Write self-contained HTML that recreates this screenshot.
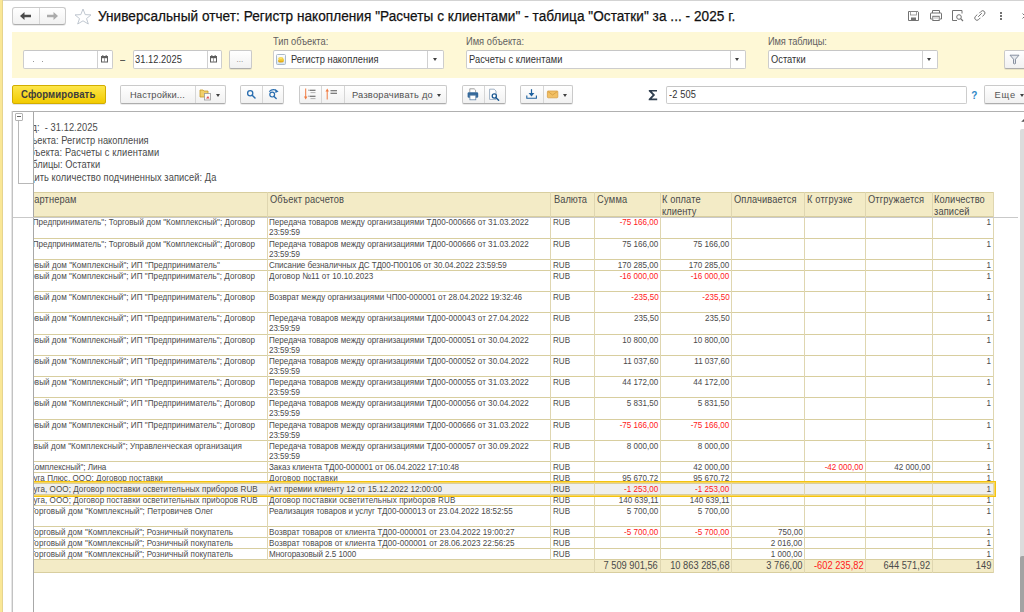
<!DOCTYPE html>
<html><head><meta charset="utf-8">
<style>
*{margin:0;padding:0;box-sizing:border-box}
html,body{width:1024px;height:612px;overflow:hidden;background:#fff;font-family:"Liberation Sans",sans-serif}
.a{position:absolute}
.t{position:absolute;white-space:pre;line-height:1.149;font-family:"Liberation Sans",sans-serif}
.btn{position:absolute;border:1px solid #cacaca;border-bottom-color:#adadad;border-radius:2px;background:linear-gradient(#ffffff,#f1f1f1);box-shadow:0 1px 0 rgba(0,0,0,0.08)}
.fld{position:absolute;border:1px solid #cdcdcd;border-top-color:#c6c6c6;border-radius:2px;background:#fff}
.dv{position:absolute;top:0;bottom:0;width:1px;background:#d0d0d0}
.lbl{position:absolute;white-space:nowrap;font-size:9.3px;line-height:1.149;color:#5e5a58}
.ddarrow{position:absolute;width:0;height:0;border-left:2.5px solid transparent;border-right:2.5px solid transparent;border-top:3px solid #404040}
#clip{position:absolute;left:34px;top:112px;width:986px;height:500px;overflow:hidden}
#inner{position:absolute;left:-34px;top:-112px;width:1024px;height:612px}
</style></head><body>
<!-- top line & left strip -->
<div class="a" style="left:0;top:0;width:1024px;height:1px;background:#d3d3d3"></div>
<div class="a" style="left:0;top:0;width:2px;height:612px;background:#fae796"></div><div class="a" style="left:2px;top:0;width:1px;height:612px;background:#e6d48e"></div>

<!-- nav buttons -->
<div class="btn" style="left:12px;top:7px;width:54px;height:18px;border-radius:3px"></div>
<div class="a" style="left:39px;top:8px;width:1px;height:16px;background:#d6d6d6"></div>
<svg class="a" style="left:19px;top:11px" width="14" height="10" viewBox="0 0 14 10"><path d="M1 5 L5.5 1 L5.5 3.8 L12 3.8 L12 6.2 L5.5 6.2 L5.5 9 Z" fill="#4a4a4a"/></svg>
<svg class="a" style="left:45px;top:11px" width="14" height="10" viewBox="0 0 14 10"><path d="M13 5 L8.5 1 L8.5 3.8 L2 3.8 L2 6.2 L8.5 6.2 L8.5 9 Z" fill="#ababab"/></svg>
<!-- star -->
<svg class="a" style="left:73.5px;top:7.5px" width="18" height="18" viewBox="0 0 18 18"><path d="M9 1 L11.2 6.6 L17 6.9 L12.5 10.6 L14.3 16 L9 12.8 L3.7 16 L5.5 10.6 L1 6.9 L6.8 6.6 Z" fill="none" stroke="#b9c1cb" stroke-width="0.9" stroke-linejoin="round"/></svg>
<!-- title -->

<!-- right icons -->
<svg class="a" style="left:907px;top:10px" width="13" height="12" viewBox="0 0 13 12">
 <path d="M1.5 1.5 H10.8 L11.5 2.2 V10.5 H1.5 Z" fill="none" stroke="#727272" stroke-width="1"/>
 <rect x="3.5" y="1.5" width="6" height="3.5" fill="none" stroke="#8a8a8a" stroke-width="0.8"/>
 <rect x="4" y="7.5" width="5" height="3" fill="#727272"/>
</svg>
<svg class="a" style="left:929px;top:9px" width="14" height="13" viewBox="0 0 14 13">
 <path d="M3.5 4 V1.5 H10.5 V4" fill="none" stroke="#727272" stroke-width="1"/>
 <path d="M3 10 H1.5 V4.5 Q1.5 4 2 4 H12 Q12.5 4 12.5 4.5 V10 H11" fill="none" stroke="#727272" stroke-width="1"/>
 <rect x="3.8" y="7.3" width="6.4" height="4.2" fill="none" stroke="#727272" stroke-width="1"/>
 <path d="M5 9 H9" stroke="#9a9a9a" stroke-width="0.7"/>
</svg>
<svg class="a" style="left:951px;top:9px" width="14" height="13" viewBox="0 0 14 13">
 <path d="M6 11.5 H1.5 V1.5 H11 V4.5" fill="none" stroke="#727272" stroke-width="1"/>
 <circle cx="8" cy="8" r="2.3" fill="none" stroke="#727272" stroke-width="1"/>
 <path d="M9.7 9.7 L12 12" stroke="#727272" stroke-width="1.2"/>
</svg>
<svg class="a" style="left:973px;top:9px" width="14" height="13" viewBox="0 0 14 13">
 <path d="M5.2 7.8 L8.8 4.2" stroke="#727272" stroke-width="1"/>
 <path d="M6.3 4.2 L8.2 2.3 Q9.8 0.9 11.3 2.4 Q12.8 3.9 11.3 5.6 L9.4 7.4" fill="none" stroke="#727272" stroke-width="1"/>
 <path d="M7.4 8.8 L5.5 10.7 Q3.9 12.1 2.4 10.6 Q0.9 9.1 2.4 7.4 L4.3 5.6" fill="none" stroke="#727272" stroke-width="1"/>
</svg>
<div class="a" style="left:1000px;top:12px;width:2px;height:2px;background:#727272"></div>
<div class="a" style="left:1000px;top:15px;width:2px;height:2px;background:#727272"></div>
<div class="a" style="left:1000px;top:18px;width:2px;height:2px;background:#727272"></div>
<svg class="a" style="left:1020.5px;top:12px" width="8" height="8" viewBox="0 0 8 8"><path d="M1.5 1.5 L6.5 6.5 M6.5 1.5 L1.5 6.5" stroke="#777" stroke-width="1"/></svg>

<!-- settings panel -->
<div class="a" style="left:12px;top:32px;width:1012px;height:46px;background:#fef8d6"></div>

<!-- date 1 -->
<div class="fld" style="left:23px;top:50px;width:90px;height:19px">
  <div class="dv" style="left:73px"></div>
</div>
<div class="a" style="left:33px;top:61px;width:1px;height:1px;background:#999"></div>
<div class="a" style="left:42px;top:61px;width:1px;height:1px;background:#999"></div>
<svg class="a" style="left:101px;top:55px" width="8" height="8" viewBox="0 0 8 8"><rect x="0.5" y="1.5" width="6" height="5.5" fill="none" stroke="#5e5e5e" stroke-width="1"/><rect x="0" y="1" width="7" height="2.2" fill="#5e5e5e"/><rect x="1.2" y="0.2" width="1.2" height="1" fill="#5e5e5e"/><rect x="4.6" y="0.2" width="1.2" height="1" fill="#5e5e5e"/><rect x="3.1" y="3" width="0.8" height="4" fill="#8a8a8a"/></svg>
<!-- date 2 -->
<div class="fld" style="left:133px;top:50px;width:89px;height:19px">
  <div class="dv" style="left:73px"></div>
</div>
<svg class="a" style="left:210px;top:55px" width="8" height="8" viewBox="0 0 8 8"><rect x="0.5" y="1.5" width="6" height="5.5" fill="none" stroke="#5e5e5e" stroke-width="1"/><rect x="0" y="1" width="7" height="2.2" fill="#5e5e5e"/><rect x="1.2" y="0.2" width="1.2" height="1" fill="#5e5e5e"/><rect x="4.6" y="0.2" width="1.2" height="1" fill="#5e5e5e"/><rect x="3.1" y="3" width="0.8" height="4" fill="#8a8a8a"/></svg>
<!-- ... button -->
<div class="btn" style="left:229px;top:50px;width:23px;height:19px"></div>

<!-- Тип объекта -->
<div class="fld" style="left:273px;top:50px;width:171px;height:19px"><div class="dv" style="left:153px"></div></div>
<svg class="a" style="left:276px;top:54px" width="10" height="11" viewBox="0 0 10 11"><defs><linearGradient id="gb" x1="0" y1="0" x2="0" y2="1"><stop offset="0" stop-color="#ffffff"/><stop offset="1" stop-color="#d6e4ef"/></linearGradient></defs><rect x="0.5" y="0.5" width="9" height="10" rx="1" fill="url(#gb)" stroke="#a9b9c9"/><ellipse cx="5" cy="6.9" rx="2.9" ry="1.7" fill="#e0a818"/><ellipse cx="5.3" cy="5.9" rx="2.7" ry="1.4" fill="#f2c530"/><ellipse cx="4.8" cy="4.4" rx="2.6" ry="1.5" fill="#f4d040"/><ellipse cx="4.8" cy="4.1" rx="1.6" ry="0.7" fill="#fae890"/></svg>
<div class="ddarrow" style="left:433px;top:58px"></div>

<!-- Имя объекта -->
<div class="fld" style="left:466px;top:50px;width:280px;height:19px"><div class="dv" style="left:263px"></div></div>
<div class="ddarrow" style="left:735px;top:58px"></div>

<!-- Имя таблицы -->
<div class="fld" style="left:768px;top:50px;width:170px;height:19px"><div class="dv" style="left:153px"></div></div>
<div class="ddarrow" style="left:927px;top:58px"></div>

<!-- filter button -->
<div class="btn" style="left:1004px;top:50px;width:30px;height:19px"></div>
<svg class="a" style="left:1009px;top:54px" width="11" height="11" viewBox="0 0 11 11"><path d="M1 1.2 H10 L6.5 5.2 V9.5 Q5.5 10.3 4.5 9.5 V5.2 Z" fill="#e6e9ee" stroke="#7d8796" stroke-width="0.9" stroke-linejoin="round"/></svg>

<!-- toolbar -->
<div class="a" style="left:12px;top:85px;width:94px;height:19px;border:1px solid #d2ad00;border-radius:2px;background:linear-gradient(#fde64a,#f2cb00);box-shadow:0 1px 0 rgba(0,0,0,0.1)"></div>

<div class="btn" style="left:120px;top:85px;width:106px;height:19px"><div class="dv" style="left:74px;background:#d6d6d6"></div></div>
<svg class="a" style="left:199.3px;top:87.5px" width="14" height="13" viewBox="0 0 14 13"><path d="M1 2 H4 L5 3 H9 V9 H1 Z" fill="#f1cf6a" stroke="#c79a2a" stroke-width="0.8"/><rect x="5.5" y="5.5" width="6" height="6.5" fill="#fafafa" stroke="#9a9a9a" stroke-width="0.8"/><path d="M7 10.5 L9 8 L10.5 10.5 Z" fill="#e05050"/></svg>
<div class="ddarrow" style="left:216.3px;top:94px"></div>

<div class="btn" style="left:240px;top:85px;width:44px;height:19px"><div class="dv" style="left:21px;background:#d6d6d6"></div></div>
<svg class="a" style="left:240px;top:85px" width="44" height="19" viewBox="240 85 44 19">
 <circle cx="250.2" cy="93.2" r="2.6" fill="none" stroke="#2a6eb0" stroke-width="1.3"/>
 <path d="M252.2 95.2 L255 98" stroke="#2a6eb0" stroke-width="1.5" stroke-linecap="round"/>
 <circle cx="272.2" cy="94.6" r="2.4" fill="none" stroke="#2a6eb0" stroke-width="1.2"/>
 <path d="M274 96.4 L276.2 98.6" stroke="#2a6eb0" stroke-width="1.4" stroke-linecap="round"/>
 <path d="M269.2 91.6 Q272.5 88.2 276.5 90.6" fill="none" stroke="#2a6eb0" stroke-width="1.1"/>
 <path d="M275.2 89 L278.6 91.4 L275.4 93 Z" fill="#2a6eb0"/>
</svg>
<div class="btn" style="left:299px;top:85px;width:148px;height:19px"><div class="dv" style="left:21px;background:#d6d6d6"></div><div class="dv" style="left:44px;background:#d6d6d6"></div></div>
<svg class="a" style="left:299px;top:85px" width="44" height="19" viewBox="299 85 44 19">
 <path d="M305.7 88.5 V97" stroke="#f07a40" stroke-width="1"/>
 <path d="M304 96.5 L305.7 99.5 L307.4 96.5 Z" fill="#f07a40"/>
 <path d="M309.5 90.2 H315.5 M309.5 96.2 H315.5" stroke="#555" stroke-width="1.1"/>
 <path d="M310.5 92.6 H315.5 M310.5 98.6 H315.5" stroke="#aaa" stroke-width="0.9"/>
 <path d="M308 90.2 H308.8 M308 96.2 H308.8" stroke="#777" stroke-width="0.8"/>
 <path d="M327.2 91 V99.5" stroke="#f07a40" stroke-width="1"/>
 <path d="M325.5 91.5 L327.2 88.5 L328.9 91.5 Z" fill="#f07a40"/>
 <path d="M330.5 90.8 H337 M330.5 93.2 H337" stroke="#555" stroke-width="1.1"/>
</svg>
<div class="t" style="display:none"></div>
<div class="ddarrow" style="left:437px;top:94px"></div>

<div class="btn" style="left:462px;top:85px;width:44px;height:19px"><div class="dv" style="left:21px;background:#d6d6d6"></div></div>
<svg class="a" style="left:460px;top:82px" width="50" height="24" viewBox="460 82 50 24"><path d="M469.8 92.5 V88.8 H474.2 L475.6 90.2 V92.5" fill="#fff" stroke="#8a8a8a" stroke-width="0.8"/><rect x="467.6" y="92.3" width="10.6" height="5.4" rx="1.3" fill="#34689a"/><rect x="469.9" y="95.2" width="5.9" height="4.6" fill="#fff" stroke="#5f84a8" stroke-width="0.8"/>
<path d="M489.6 89.2 H494.2 L496 91 V99.4 H489.6 Z" fill="#fff" stroke="#8aa0b8" stroke-width="0.8"/><circle cx="494.3" cy="96" r="2.1" fill="#fff" stroke="#1f5a92" stroke-width="1.3"/><path d="M495.8 97.5 L498.6 100.2" stroke="#1f5a92" stroke-width="1.5" stroke-linecap="round"/></svg>

<div class="btn" style="left:520px;top:85px;width:53px;height:19px"><div class="dv" style="left:22px;background:#d6d6d6"></div></div>
<svg class="a" style="left:520px;top:82px" width="55" height="24" viewBox="520 82 55 24"><path d="M531.5 89.2 V95" stroke="#1f62a0" stroke-width="1.2"/><path d="M528.6 93 L531.5 96.4 L534.4 93 Z" fill="#1f62a0"/><path d="M526.8 95.6 V98.2 H536.4 V95.6" fill="none" stroke="#1f62a0" stroke-width="1.1"/>
<rect x="547.4" y="91" width="10.4" height="6.8" rx="0.8" fill="#f2c064" stroke="#d8a046" stroke-width="0.8"/><path d="M547.8 91.4 L552.6 95 L557.4 91.4" fill="none" stroke="#d39a3e" stroke-width="0.8"/></svg>
<div class="ddarrow" style="left:563px;top:94px"></div>

<svg class="a" style="left:647px;top:88px" width="13" height="14" viewBox="0 0 13 14"><path d="M1.8 2 H10 V3.6 H4.8 L8.1 7.1 L4.7 10.6 H10.2 V12.2 H1.7 V10.9 L5.6 7.1 L1.8 3.3 Z" fill="#2f3e4e"/></svg>
<div class="fld" style="left:666px;top:85.5px;width:301px;height:18px"></div>
<div class="btn" style="left:984px;top:85px;width:50px;height:19px"></div>
<div class="ddarrow" style="left:1019.5px;top:94px"></div>

<!-- report frame -->
<div class="a" style="left:12px;top:111px;width:1012px;height:1px;background:#b0b0b0"></div>
<div class="a" style="left:11px;top:111px;width:1px;height:501px;background:#e6e6e6"></div><div class="a" style="left:12px;top:111px;width:1px;height:501px;background:#c2c2c2"></div>
<div class="a" style="left:33px;top:112px;width:1px;height:500px;background:#a8a8a8"></div>
<!-- group tree -->
<div class="a" style="left:15px;top:113px;width:8px;height:8px;border:1px solid #b4b4b4;border-radius:1px;background:#fff"></div>
<div class="a" style="left:17px;top:116px;width:4px;height:1px;background:#666"></div>
<div class="a" style="left:18px;top:121px;width:1px;height:63px;background:#b8b8b8"></div>
<div class="a" style="left:18px;top:183px;width:15px;height:1px;background:#b8b8b8"></div>
<!-- freeze line -->
<div class="a" style="left:13px;top:217px;width:1005px;height:1px;background:#c9c9c9"></div>

<div class="t" style="left:98.00px;top:7.00px;font-size:14.96px;color:#111;font-weight:normal;transform:scaleX(0.9091);transform-origin:left 0;letter-spacing:0.0450px;-webkit-text-stroke:0.25px #111;">Универсальный отчет: Регистр накопления "Расчеты с клиентами" - таблица "Остатки" за ... - 2025 г.</div>
<div class="t" style="left:120.00px;top:54.00px;font-size:10.42px;color:#333;font-weight:normal;transform:scaleX(0.8929);transform-origin:left 0;">–</div>
<div class="t" style="left:135.40px;top:54.00px;font-size:10.42px;color:#333;font-weight:normal;transform:scaleX(0.8929);transform-origin:left 0;letter-spacing:0.0461px;">31.12.2025</div>
<div class="t" style="left:236.50px;top:55.00px;font-size:8.00px;color:#777;font-weight:normal;">...</div>
<div class="t" style="left:273.00px;top:36.00px;font-size:10.42px;color:#626060;font-weight:normal;transform:scaleX(0.8929);transform-origin:left 0;letter-spacing:-0.0028px;">Тип объекта:</div>
<div class="t" style="left:466.20px;top:36.00px;font-size:10.42px;color:#626060;font-weight:normal;transform:scaleX(0.8929);transform-origin:left 0;letter-spacing:0.0064px;">Имя объекта:</div>
<div class="t" style="left:768.20px;top:36.00px;font-size:10.42px;color:#626060;font-weight:normal;transform:scaleX(0.8929);transform-origin:left 0;letter-spacing:-0.1354px;">Имя таблицы:</div>
<div class="t" style="left:290.80px;top:54.00px;font-size:10.42px;color:#333;font-weight:normal;transform:scaleX(0.8929);transform-origin:left 0;letter-spacing:0.0432px;">Регистр накопления</div>
<div class="t" style="left:469.20px;top:54.00px;font-size:10.42px;color:#333;font-weight:normal;transform:scaleX(0.8929);transform-origin:left 0;letter-spacing:0.0890px;">Расчеты с клиентами</div>
<div class="t" style="left:771.00px;top:54.00px;font-size:10.42px;color:#333;font-weight:normal;transform:scaleX(0.8929);transform-origin:left 0;letter-spacing:0.0153px;">Остатки</div>
<div class="t" style="left:21.40px;top:89.00px;font-size:10.37px;color:#3c3c3c;font-weight:bold;transform:scaleX(0.9259);transform-origin:left 0;letter-spacing:0.1196px;">Сформировать</div>
<div class="t" style="left:129.90px;top:89.00px;font-size:9.86px;color:#505050;font-weight:normal;transform:scaleX(0.9434);transform-origin:left 0;letter-spacing:0.1509px;">Настройки...</div>
<div class="t" style="left:351.90px;top:89.00px;font-size:9.86px;color:#505050;font-weight:normal;transform:scaleX(0.9434);transform-origin:left 0;letter-spacing:0.2346px;">Разворачивать до</div>
<div class="t" style="left:668.70px;top:89.00px;font-size:10.42px;color:#333;font-weight:normal;transform:scaleX(0.8929);transform-origin:left 0;letter-spacing:0.1432px;">-2 505</div>
<div class="t" style="left:994.50px;top:90.00px;font-size:9.30px;color:#555555;font-weight:normal;letter-spacing:0.8420px;">Еще</div>
<div class="t" style="left:971.30px;top:90.00px;font-size:10.00px;color:#3088c8;font-weight:bold;">?</div>
<div id="clip"><div id="inner">
<div class="a" style="left:34px;top:192px;width:959px;height:24px;background:#f3ebc6"></div>
<div class="a" style="left:34px;top:559px;width:959px;height:13px;background:#f3ebc6"></div>
<div class="a" style="left:34px;top:484px;width:959px;height:10px;background:#efefef"></div>
<div class="a" style="left:34px;top:192px;width:960px;height:1px;background:#d8ce9f"></div>
<div class="a" style="left:34px;top:216px;width:960px;height:1px;background:#d8ce9f"></div>
<div class="a" style="left:34px;top:238px;width:960px;height:1px;background:#d8ce9f"></div>
<div class="a" style="left:34px;top:259px;width:960px;height:1px;background:#d8ce9f"></div>
<div class="a" style="left:34px;top:270px;width:960px;height:1px;background:#d8ce9f"></div>
<div class="a" style="left:34px;top:291px;width:960px;height:1px;background:#d8ce9f"></div>
<div class="a" style="left:34px;top:312px;width:960px;height:1px;background:#d8ce9f"></div>
<div class="a" style="left:34px;top:334px;width:960px;height:1px;background:#d8ce9f"></div>
<div class="a" style="left:34px;top:355px;width:960px;height:1px;background:#d8ce9f"></div>
<div class="a" style="left:34px;top:376px;width:960px;height:1px;background:#d8ce9f"></div>
<div class="a" style="left:34px;top:397px;width:960px;height:1px;background:#d8ce9f"></div>
<div class="a" style="left:34px;top:419px;width:960px;height:1px;background:#d8ce9f"></div>
<div class="a" style="left:34px;top:440px;width:960px;height:1px;background:#d8ce9f"></div>
<div class="a" style="left:34px;top:461px;width:960px;height:1px;background:#d8ce9f"></div>
<div class="a" style="left:34px;top:472px;width:960px;height:1px;background:#d8ce9f"></div>
<div class="a" style="left:34px;top:483px;width:960px;height:1px;background:#d8ce9f"></div>
<div class="a" style="left:34px;top:494px;width:960px;height:1px;background:#d8ce9f"></div>
<div class="a" style="left:34px;top:505px;width:960px;height:1px;background:#d8ce9f"></div>
<div class="a" style="left:34px;top:526px;width:960px;height:1px;background:#d8ce9f"></div>
<div class="a" style="left:34px;top:537px;width:960px;height:1px;background:#d8ce9f"></div>
<div class="a" style="left:34px;top:548px;width:960px;height:1px;background:#d8ce9f"></div>
<div class="a" style="left:34px;top:559px;width:960px;height:1px;background:#d8ce9f"></div>
<div class="a" style="left:34px;top:572px;width:960px;height:1px;background:#d8ce9f"></div>
<div class="a" style="left:267px;top:192px;width:1px;height:368px;background:#dfd6b0"></div>
<div class="a" style="left:550px;top:192px;width:1px;height:368px;background:#dfd6b0"></div>
<div class="a" style="left:594px;top:192px;width:1px;height:381px;background:#dfd6b0"></div>
<div class="a" style="left:660px;top:192px;width:1px;height:381px;background:#dfd6b0"></div>
<div class="a" style="left:731px;top:192px;width:1px;height:381px;background:#dfd6b0"></div>
<div class="a" style="left:804px;top:192px;width:1px;height:381px;background:#dfd6b0"></div>
<div class="a" style="left:865px;top:192px;width:1px;height:381px;background:#dfd6b0"></div>
<div class="a" style="left:932px;top:192px;width:1px;height:381px;background:#dfd6b0"></div>
<div class="a" style="left:993px;top:192px;width:1px;height:381px;background:#dfd6b0"></div>
<div class="a" style="left:0px;top:217px;width:1018px;height:1px;background:#c9c9c9"></div>
<div class="t" style="left:28.94px;top:194.00px;font-size:10.42px;color:#4a4a4a;font-weight:normal;transform:scaleX(0.8929);transform-origin:left 0;letter-spacing:0.1389px;">партнерам</div>
<div class="t" style="left:269.60px;top:194.00px;font-size:10.42px;color:#4a4a4a;font-weight:normal;transform:scaleX(0.8929);transform-origin:left 0;letter-spacing:0.0724px;">Объект расчетов</div>
<div class="t" style="left:553.60px;top:194.00px;font-size:10.42px;color:#4a4a4a;font-weight:normal;transform:scaleX(0.8929);transform-origin:left 0;letter-spacing:0.0250px;">Валюта</div>
<div class="t" style="left:597.20px;top:194.00px;font-size:10.42px;color:#4a4a4a;font-weight:normal;transform:scaleX(0.8929);transform-origin:left 0;letter-spacing:0.3048px;">Сумма</div>
<div class="t" style="left:662.20px;top:194.00px;font-size:10.42px;color:#4a4a4a;font-weight:normal;transform:scaleX(0.8929);transform-origin:left 0;letter-spacing:0.1091px;">К оплате</div>
<div class="t" style="left:662.20px;top:206.00px;font-size:10.42px;color:#4a4a4a;font-weight:normal;transform:scaleX(0.8929);transform-origin:left 0;letter-spacing:0.0550px;">клиенту</div>
<div class="t" style="left:733.60px;top:194.00px;font-size:10.42px;color:#4a4a4a;font-weight:normal;transform:scaleX(0.8929);transform-origin:left 0;letter-spacing:0.1124px;">Оплачивается</div>
<div class="t" style="left:807.00px;top:194.00px;font-size:10.42px;color:#4a4a4a;font-weight:normal;transform:scaleX(0.8929);transform-origin:left 0;letter-spacing:0.1825px;">К отгрузке</div>
<div class="t" style="left:867.70px;top:194.00px;font-size:10.42px;color:#4a4a4a;font-weight:normal;transform:scaleX(0.8929);transform-origin:left 0;letter-spacing:0.1359px;">Отгружается</div>
<div class="t" style="left:934.40px;top:194.00px;font-size:10.42px;color:#4a4a4a;font-weight:normal;transform:scaleX(0.8929);transform-origin:left 0;letter-spacing:0.1089px;">Количество</div>
<div class="t" style="left:934.40px;top:206.00px;font-size:10.42px;color:#4a4a4a;font-weight:normal;transform:scaleX(0.8929);transform-origin:left 0;letter-spacing:0.1544px;">записей</div>
<div class="t" style="left:16.31px;top:217.00px;font-size:9.05px;color:#4a4a4a;font-weight:normal;transform:scaleX(0.8929);transform-origin:left 0;letter-spacing:0.0139px;">ИП "Предприниматель"; Торговый дом "Комплексный"; Договор</div>
<div class="t" style="left:268.90px;top:217.00px;font-size:9.05px;color:#4a4a4a;font-weight:normal;transform:scaleX(0.8929);transform-origin:left 0;letter-spacing:0.0184px;">Передача товаров между организациями ТД00-000666 от 31.03.2022</div>
<div class="t" style="left:268.90px;top:227.00px;font-size:9.05px;color:#4a4a4a;font-weight:normal;transform:scaleX(0.8929);transform-origin:left 0;letter-spacing:-0.0712px;">23:59:59</div>
<div class="t" style="left:553.00px;top:217.00px;font-size:9.05px;color:#4a4a4a;font-weight:normal;transform:scaleX(0.8929);transform-origin:left 0;">RUB</div>
<div class="t" style="right:365.80px;top:217.00px;font-size:9.05px;color:#ff2020;font-weight:normal;transform:scaleX(0.8929);transform-origin:right 0;">-75 166,00</div>
<div class="t" style="right:32.80px;top:217.00px;font-size:9.05px;color:#4a4a4a;font-weight:normal;transform:scaleX(0.8929);transform-origin:right 0;">1</div>
<div class="t" style="left:16.31px;top:239.00px;font-size:9.05px;color:#4a4a4a;font-weight:normal;transform:scaleX(0.8929);transform-origin:left 0;letter-spacing:0.0139px;">ИП "Предприниматель"; Торговый дом "Комплексный"; Договор</div>
<div class="t" style="left:268.90px;top:239.00px;font-size:9.05px;color:#4a4a4a;font-weight:normal;transform:scaleX(0.8929);transform-origin:left 0;letter-spacing:0.0184px;">Передача товаров между организациями ТД00-000666 от 31.03.2022</div>
<div class="t" style="left:268.90px;top:249.00px;font-size:9.05px;color:#4a4a4a;font-weight:normal;transform:scaleX(0.8929);transform-origin:left 0;letter-spacing:-0.0712px;">23:59:59</div>
<div class="t" style="left:553.00px;top:239.00px;font-size:9.05px;color:#4a4a4a;font-weight:normal;transform:scaleX(0.8929);transform-origin:left 0;">RUB</div>
<div class="t" style="right:365.80px;top:239.00px;font-size:9.05px;color:#4a4a4a;font-weight:normal;transform:scaleX(0.8929);transform-origin:right 0;">75 166,00</div>
<div class="t" style="right:294.80px;top:239.00px;font-size:9.05px;color:#4a4a4a;font-weight:normal;transform:scaleX(0.8929);transform-origin:right 0;">75 166,00</div>
<div class="t" style="right:32.80px;top:239.00px;font-size:9.05px;color:#4a4a4a;font-weight:normal;transform:scaleX(0.8929);transform-origin:right 0;">1</div>
<div class="t" style="left:13.67px;top:260.00px;font-size:9.05px;color:#4a4a4a;font-weight:normal;transform:scaleX(0.8929);transform-origin:left 0;letter-spacing:0.0625px;">Торговый дом "Комплексный"; ИП "Предприниматель"</div>
<div class="t" style="left:268.90px;top:260.00px;font-size:9.05px;color:#4a4a4a;font-weight:normal;transform:scaleX(0.8929);transform-origin:left 0;letter-spacing:-0.0572px;">Списание безналичных ДС ТД00-П00106 от 30.04.2022 23:59:59</div>
<div class="t" style="left:553.00px;top:260.00px;font-size:9.05px;color:#4a4a4a;font-weight:normal;transform:scaleX(0.8929);transform-origin:left 0;">RUB</div>
<div class="t" style="right:365.80px;top:260.00px;font-size:9.05px;color:#4a4a4a;font-weight:normal;transform:scaleX(0.8929);transform-origin:right 0;">170 285,00</div>
<div class="t" style="right:294.80px;top:260.00px;font-size:9.05px;color:#4a4a4a;font-weight:normal;transform:scaleX(0.8929);transform-origin:right 0;">170 285,00</div>
<div class="t" style="right:32.80px;top:260.00px;font-size:9.05px;color:#4a4a4a;font-weight:normal;transform:scaleX(0.8929);transform-origin:right 0;">1</div>
<div class="t" style="left:14.20px;top:271.00px;font-size:9.05px;color:#4a4a4a;font-weight:normal;transform:scaleX(0.8929);transform-origin:left 0;letter-spacing:0.0561px;">Торговый дом "Комплексный"; ИП "Предприниматель"; Договор</div>
<div class="t" style="left:268.90px;top:271.00px;font-size:9.05px;color:#4a4a4a;font-weight:normal;transform:scaleX(0.8929);transform-origin:left 0;letter-spacing:0.0732px;">Договор №11 от 10.10.2023</div>
<div class="t" style="left:553.00px;top:271.00px;font-size:9.05px;color:#4a4a4a;font-weight:normal;transform:scaleX(0.8929);transform-origin:left 0;">RUB</div>
<div class="t" style="right:365.80px;top:271.00px;font-size:9.05px;color:#ff2020;font-weight:normal;transform:scaleX(0.8929);transform-origin:right 0;">-16 000,00</div>
<div class="t" style="right:294.80px;top:271.00px;font-size:9.05px;color:#ff2020;font-weight:normal;transform:scaleX(0.8929);transform-origin:right 0;">-16 000,00</div>
<div class="t" style="right:32.80px;top:271.00px;font-size:9.05px;color:#4a4a4a;font-weight:normal;transform:scaleX(0.8929);transform-origin:right 0;">1</div>
<div class="t" style="left:14.20px;top:292.00px;font-size:9.05px;color:#4a4a4a;font-weight:normal;transform:scaleX(0.8929);transform-origin:left 0;letter-spacing:0.0561px;">Торговый дом "Комплексный"; ИП "Предприниматель"; Договор</div>
<div class="t" style="left:268.90px;top:292.00px;font-size:9.05px;color:#4a4a4a;font-weight:normal;transform:scaleX(0.8929);transform-origin:left 0;letter-spacing:-0.0308px;">Возврат между организациями ЧП00-000001 от 28.04.2022 19:32:46</div>
<div class="t" style="left:553.00px;top:292.00px;font-size:9.05px;color:#4a4a4a;font-weight:normal;transform:scaleX(0.8929);transform-origin:left 0;">RUB</div>
<div class="t" style="right:365.80px;top:292.00px;font-size:9.05px;color:#ff2020;font-weight:normal;transform:scaleX(0.8929);transform-origin:right 0;">-235,50</div>
<div class="t" style="right:294.80px;top:292.00px;font-size:9.05px;color:#ff2020;font-weight:normal;transform:scaleX(0.8929);transform-origin:right 0;">-235,50</div>
<div class="t" style="right:32.80px;top:292.00px;font-size:9.05px;color:#4a4a4a;font-weight:normal;transform:scaleX(0.8929);transform-origin:right 0;">1</div>
<div class="t" style="left:14.20px;top:313.00px;font-size:9.05px;color:#4a4a4a;font-weight:normal;transform:scaleX(0.8929);transform-origin:left 0;letter-spacing:0.0561px;">Торговый дом "Комплексный"; ИП "Предприниматель"; Договор</div>
<div class="t" style="left:268.90px;top:313.00px;font-size:9.05px;color:#4a4a4a;font-weight:normal;transform:scaleX(0.8929);transform-origin:left 0;letter-spacing:0.0184px;">Передача товаров между организациями ТД00-000043 от 27.04.2022</div>
<div class="t" style="left:268.90px;top:323.00px;font-size:9.05px;color:#4a4a4a;font-weight:normal;transform:scaleX(0.8929);transform-origin:left 0;letter-spacing:-0.0712px;">23:59:59</div>
<div class="t" style="left:553.00px;top:313.00px;font-size:9.05px;color:#4a4a4a;font-weight:normal;transform:scaleX(0.8929);transform-origin:left 0;">RUB</div>
<div class="t" style="right:365.80px;top:313.00px;font-size:9.05px;color:#4a4a4a;font-weight:normal;transform:scaleX(0.8929);transform-origin:right 0;">235,50</div>
<div class="t" style="right:294.80px;top:313.00px;font-size:9.05px;color:#4a4a4a;font-weight:normal;transform:scaleX(0.8929);transform-origin:right 0;">235,50</div>
<div class="t" style="right:32.80px;top:313.00px;font-size:9.05px;color:#4a4a4a;font-weight:normal;transform:scaleX(0.8929);transform-origin:right 0;">1</div>
<div class="t" style="left:14.20px;top:335.00px;font-size:9.05px;color:#4a4a4a;font-weight:normal;transform:scaleX(0.8929);transform-origin:left 0;letter-spacing:0.0561px;">Торговый дом "Комплексный"; ИП "Предприниматель"; Договор</div>
<div class="t" style="left:268.90px;top:335.00px;font-size:9.05px;color:#4a4a4a;font-weight:normal;transform:scaleX(0.8929);transform-origin:left 0;letter-spacing:0.0184px;">Передача товаров между организациями ТД00-000051 от 30.04.2022</div>
<div class="t" style="left:268.90px;top:345.00px;font-size:9.05px;color:#4a4a4a;font-weight:normal;transform:scaleX(0.8929);transform-origin:left 0;letter-spacing:-0.0712px;">23:59:59</div>
<div class="t" style="left:553.00px;top:335.00px;font-size:9.05px;color:#4a4a4a;font-weight:normal;transform:scaleX(0.8929);transform-origin:left 0;">RUB</div>
<div class="t" style="right:365.80px;top:335.00px;font-size:9.05px;color:#4a4a4a;font-weight:normal;transform:scaleX(0.8929);transform-origin:right 0;">10 800,00</div>
<div class="t" style="right:294.80px;top:335.00px;font-size:9.05px;color:#4a4a4a;font-weight:normal;transform:scaleX(0.8929);transform-origin:right 0;">10 800,00</div>
<div class="t" style="right:32.80px;top:335.00px;font-size:9.05px;color:#4a4a4a;font-weight:normal;transform:scaleX(0.8929);transform-origin:right 0;">1</div>
<div class="t" style="left:14.20px;top:356.00px;font-size:9.05px;color:#4a4a4a;font-weight:normal;transform:scaleX(0.8929);transform-origin:left 0;letter-spacing:0.0561px;">Торговый дом "Комплексный"; ИП "Предприниматель"; Договор</div>
<div class="t" style="left:268.90px;top:356.00px;font-size:9.05px;color:#4a4a4a;font-weight:normal;transform:scaleX(0.8929);transform-origin:left 0;letter-spacing:0.0184px;">Передача товаров между организациями ТД00-000052 от 30.04.2022</div>
<div class="t" style="left:268.90px;top:366.00px;font-size:9.05px;color:#4a4a4a;font-weight:normal;transform:scaleX(0.8929);transform-origin:left 0;letter-spacing:-0.0712px;">23:59:59</div>
<div class="t" style="left:553.00px;top:356.00px;font-size:9.05px;color:#4a4a4a;font-weight:normal;transform:scaleX(0.8929);transform-origin:left 0;">RUB</div>
<div class="t" style="right:365.80px;top:356.00px;font-size:9.05px;color:#4a4a4a;font-weight:normal;transform:scaleX(0.8929);transform-origin:right 0;">11 037,60</div>
<div class="t" style="right:294.80px;top:356.00px;font-size:9.05px;color:#4a4a4a;font-weight:normal;transform:scaleX(0.8929);transform-origin:right 0;">11 037,60</div>
<div class="t" style="right:32.80px;top:356.00px;font-size:9.05px;color:#4a4a4a;font-weight:normal;transform:scaleX(0.8929);transform-origin:right 0;">1</div>
<div class="t" style="left:14.20px;top:377.00px;font-size:9.05px;color:#4a4a4a;font-weight:normal;transform:scaleX(0.8929);transform-origin:left 0;letter-spacing:0.0561px;">Торговый дом "Комплексный"; ИП "Предприниматель"; Договор</div>
<div class="t" style="left:268.90px;top:377.00px;font-size:9.05px;color:#4a4a4a;font-weight:normal;transform:scaleX(0.8929);transform-origin:left 0;letter-spacing:0.0184px;">Передача товаров между организациями ТД00-000055 от 31.03.2022</div>
<div class="t" style="left:268.90px;top:387.00px;font-size:9.05px;color:#4a4a4a;font-weight:normal;transform:scaleX(0.8929);transform-origin:left 0;letter-spacing:-0.0712px;">23:59:59</div>
<div class="t" style="left:553.00px;top:377.00px;font-size:9.05px;color:#4a4a4a;font-weight:normal;transform:scaleX(0.8929);transform-origin:left 0;">RUB</div>
<div class="t" style="right:365.80px;top:377.00px;font-size:9.05px;color:#4a4a4a;font-weight:normal;transform:scaleX(0.8929);transform-origin:right 0;">44 172,00</div>
<div class="t" style="right:294.80px;top:377.00px;font-size:9.05px;color:#4a4a4a;font-weight:normal;transform:scaleX(0.8929);transform-origin:right 0;">44 172,00</div>
<div class="t" style="right:32.80px;top:377.00px;font-size:9.05px;color:#4a4a4a;font-weight:normal;transform:scaleX(0.8929);transform-origin:right 0;">1</div>
<div class="t" style="left:14.20px;top:398.00px;font-size:9.05px;color:#4a4a4a;font-weight:normal;transform:scaleX(0.8929);transform-origin:left 0;letter-spacing:0.0561px;">Торговый дом "Комплексный"; ИП "Предприниматель"; Договор</div>
<div class="t" style="left:268.90px;top:398.00px;font-size:9.05px;color:#4a4a4a;font-weight:normal;transform:scaleX(0.8929);transform-origin:left 0;letter-spacing:0.0184px;">Передача товаров между организациями ТД00-000056 от 30.04.2022</div>
<div class="t" style="left:268.90px;top:408.00px;font-size:9.05px;color:#4a4a4a;font-weight:normal;transform:scaleX(0.8929);transform-origin:left 0;letter-spacing:-0.0712px;">23:59:59</div>
<div class="t" style="left:553.00px;top:398.00px;font-size:9.05px;color:#4a4a4a;font-weight:normal;transform:scaleX(0.8929);transform-origin:left 0;">RUB</div>
<div class="t" style="right:365.80px;top:398.00px;font-size:9.05px;color:#4a4a4a;font-weight:normal;transform:scaleX(0.8929);transform-origin:right 0;">5 831,50</div>
<div class="t" style="right:294.80px;top:398.00px;font-size:9.05px;color:#4a4a4a;font-weight:normal;transform:scaleX(0.8929);transform-origin:right 0;">5 831,50</div>
<div class="t" style="right:32.80px;top:398.00px;font-size:9.05px;color:#4a4a4a;font-weight:normal;transform:scaleX(0.8929);transform-origin:right 0;">1</div>
<div class="t" style="left:14.20px;top:420.00px;font-size:9.05px;color:#4a4a4a;font-weight:normal;transform:scaleX(0.8929);transform-origin:left 0;letter-spacing:0.0561px;">Торговый дом "Комплексный"; ИП "Предприниматель"; Договор</div>
<div class="t" style="left:268.90px;top:420.00px;font-size:9.05px;color:#4a4a4a;font-weight:normal;transform:scaleX(0.8929);transform-origin:left 0;letter-spacing:0.0184px;">Передача товаров между организациями ТД00-000666 от 31.03.2022</div>
<div class="t" style="left:268.90px;top:430.00px;font-size:9.05px;color:#4a4a4a;font-weight:normal;transform:scaleX(0.8929);transform-origin:left 0;letter-spacing:-0.0712px;">23:59:59</div>
<div class="t" style="left:553.00px;top:420.00px;font-size:9.05px;color:#4a4a4a;font-weight:normal;transform:scaleX(0.8929);transform-origin:left 0;">RUB</div>
<div class="t" style="right:365.80px;top:420.00px;font-size:9.05px;color:#ff2020;font-weight:normal;transform:scaleX(0.8929);transform-origin:right 0;">-75 166,00</div>
<div class="t" style="right:294.80px;top:420.00px;font-size:9.05px;color:#ff2020;font-weight:normal;transform:scaleX(0.8929);transform-origin:right 0;">-75 166,00</div>
<div class="t" style="right:32.80px;top:420.00px;font-size:9.05px;color:#4a4a4a;font-weight:normal;transform:scaleX(0.8929);transform-origin:right 0;">1</div>
<div class="t" style="left:12.65px;top:441.00px;font-size:9.05px;color:#4a4a4a;font-weight:normal;transform:scaleX(0.8929);transform-origin:left 0;letter-spacing:0.0664px;">Торговый дом "Комплексный"; Управленческая организация</div>
<div class="t" style="left:268.90px;top:441.00px;font-size:9.05px;color:#4a4a4a;font-weight:normal;transform:scaleX(0.8929);transform-origin:left 0;letter-spacing:0.0184px;">Передача товаров между организациями ТД00-000057 от 30.09.2022</div>
<div class="t" style="left:268.90px;top:451.00px;font-size:9.05px;color:#4a4a4a;font-weight:normal;transform:scaleX(0.8929);transform-origin:left 0;letter-spacing:-0.0712px;">23:59:59</div>
<div class="t" style="left:553.00px;top:441.00px;font-size:9.05px;color:#4a4a4a;font-weight:normal;transform:scaleX(0.8929);transform-origin:left 0;">RUB</div>
<div class="t" style="right:365.80px;top:441.00px;font-size:9.05px;color:#4a4a4a;font-weight:normal;transform:scaleX(0.8929);transform-origin:right 0;">8 000,00</div>
<div class="t" style="right:294.80px;top:441.00px;font-size:9.05px;color:#4a4a4a;font-weight:normal;transform:scaleX(0.8929);transform-origin:right 0;">8 000,00</div>
<div class="t" style="right:32.80px;top:441.00px;font-size:9.05px;color:#4a4a4a;font-weight:normal;transform:scaleX(0.8929);transform-origin:right 0;">1</div>
<div class="t" style="left:15.23px;top:462.00px;font-size:9.05px;color:#4a4a4a;font-weight:normal;transform:scaleX(0.8929);transform-origin:left 0;letter-spacing:-0.0416px;">ТД "Комплексный"; Лина</div>
<div class="t" style="left:268.90px;top:462.00px;font-size:9.05px;color:#4a4a4a;font-weight:normal;transform:scaleX(0.8929);transform-origin:left 0;letter-spacing:-0.0209px;">Заказ клиента ТД00-000001 от 06.04.2022 17:10:48</div>
<div class="t" style="left:553.00px;top:462.00px;font-size:9.05px;color:#4a4a4a;font-weight:normal;transform:scaleX(0.8929);transform-origin:left 0;">RUB</div>
<div class="t" style="right:294.80px;top:462.00px;font-size:9.05px;color:#4a4a4a;font-weight:normal;transform:scaleX(0.8929);transform-origin:right 0;">42 000,00</div>
<div class="t" style="right:160.80px;top:462.00px;font-size:9.05px;color:#ff2020;font-weight:normal;transform:scaleX(0.8929);transform-origin:right 0;">-42 000,00</div>
<div class="t" style="right:93.80px;top:462.00px;font-size:9.05px;color:#4a4a4a;font-weight:normal;transform:scaleX(0.8929);transform-origin:right 0;">42 000,00</div>
<div class="t" style="right:32.80px;top:462.00px;font-size:9.05px;color:#4a4a4a;font-weight:normal;transform:scaleX(0.8929);transform-origin:right 0;">1</div>
<div class="t" style="left:19.05px;top:473.00px;font-size:9.05px;color:#4a4a4a;font-weight:normal;transform:scaleX(0.8929);transform-origin:left 0;letter-spacing:0.0455px;">Радуга Плюс, ООО; Договор поставки</div>
<div class="t" style="left:268.90px;top:473.00px;font-size:9.05px;color:#4a4a4a;font-weight:normal;transform:scaleX(0.8929);transform-origin:left 0;letter-spacing:0.1947px;">Договор поставки</div>
<div class="t" style="left:553.00px;top:473.00px;font-size:9.05px;color:#4a4a4a;font-weight:normal;transform:scaleX(0.8929);transform-origin:left 0;">RUB</div>
<div class="t" style="right:365.80px;top:473.00px;font-size:9.05px;color:#4a4a4a;font-weight:normal;transform:scaleX(0.8929);transform-origin:right 0;">95 670,72</div>
<div class="t" style="right:294.80px;top:473.00px;font-size:9.05px;color:#4a4a4a;font-weight:normal;transform:scaleX(0.8929);transform-origin:right 0;">95 670,72</div>
<div class="t" style="right:32.80px;top:473.00px;font-size:9.05px;color:#4a4a4a;font-weight:normal;transform:scaleX(0.8929);transform-origin:right 0;">1</div>
<div class="t" style="left:19.49px;top:484.00px;font-size:9.05px;color:#4a4a4a;font-weight:normal;transform:scaleX(0.8929);transform-origin:left 0;letter-spacing:0.0686px;">Радуга, ООО; Договор поставки осветительных приборов RUB</div>
<div class="t" style="left:268.90px;top:484.00px;font-size:9.05px;color:#4a4a4a;font-weight:normal;transform:scaleX(0.8929);transform-origin:left 0;letter-spacing:0.0097px;">Акт премии клиенту 12 от 15.12.2022 12:00:00</div>
<div class="t" style="left:553.00px;top:484.00px;font-size:9.05px;color:#4a4a4a;font-weight:normal;transform:scaleX(0.8929);transform-origin:left 0;">RUB</div>
<div class="t" style="right:365.80px;top:484.00px;font-size:9.05px;color:#ff2020;font-weight:normal;transform:scaleX(0.8929);transform-origin:right 0;">-1 253,00</div>
<div class="t" style="right:294.80px;top:484.00px;font-size:9.05px;color:#ff2020;font-weight:normal;transform:scaleX(0.8929);transform-origin:right 0;">-1 253,00</div>
<div class="t" style="right:32.80px;top:484.00px;font-size:9.05px;color:#4a4a4a;font-weight:normal;transform:scaleX(0.8929);transform-origin:right 0;">1</div>
<div class="t" style="left:19.49px;top:495.00px;font-size:9.05px;color:#4a4a4a;font-weight:normal;transform:scaleX(0.8929);transform-origin:left 0;letter-spacing:0.0686px;">Радуга, ООО; Договор поставки осветительных приборов RUB</div>
<div class="t" style="left:268.90px;top:495.00px;font-size:9.05px;color:#4a4a4a;font-weight:normal;transform:scaleX(0.8929);transform-origin:left 0;letter-spacing:0.1203px;">Договор поставки осветительных приборов RUB</div>
<div class="t" style="left:553.00px;top:495.00px;font-size:9.05px;color:#4a4a4a;font-weight:normal;transform:scaleX(0.8929);transform-origin:left 0;">RUB</div>
<div class="t" style="right:365.80px;top:495.00px;font-size:9.05px;color:#4a4a4a;font-weight:normal;transform:scaleX(0.8929);transform-origin:right 0;">140 639,11</div>
<div class="t" style="right:294.80px;top:495.00px;font-size:9.05px;color:#4a4a4a;font-weight:normal;transform:scaleX(0.8929);transform-origin:right 0;">140 639,11</div>
<div class="t" style="right:32.80px;top:495.00px;font-size:9.05px;color:#4a4a4a;font-weight:normal;transform:scaleX(0.8929);transform-origin:right 0;">1</div>
<div class="t" style="left:29.50px;top:506.00px;font-size:9.05px;color:#4a4a4a;font-weight:normal;transform:scaleX(0.8929);transform-origin:left 0;letter-spacing:0.0717px;">Торговый дом "Комплексный"; Петровичев Олег</div>
<div class="t" style="left:268.90px;top:506.00px;font-size:9.05px;color:#4a4a4a;font-weight:normal;transform:scaleX(0.8929);transform-origin:left 0;letter-spacing:0.0020px;">Реализация товаров и услуг ТД00-000013 от 23.04.2022 18:52:55</div>
<div class="t" style="left:553.00px;top:506.00px;font-size:9.05px;color:#4a4a4a;font-weight:normal;transform:scaleX(0.8929);transform-origin:left 0;">RUB</div>
<div class="t" style="right:365.80px;top:506.00px;font-size:9.05px;color:#4a4a4a;font-weight:normal;transform:scaleX(0.8929);transform-origin:right 0;">5 700,00</div>
<div class="t" style="right:294.80px;top:506.00px;font-size:9.05px;color:#4a4a4a;font-weight:normal;transform:scaleX(0.8929);transform-origin:right 0;">5 700,00</div>
<div class="t" style="right:32.80px;top:506.00px;font-size:9.05px;color:#4a4a4a;font-weight:normal;transform:scaleX(0.8929);transform-origin:right 0;">1</div>
<div class="t" style="left:29.52px;top:527.00px;font-size:9.05px;color:#4a4a4a;font-weight:normal;transform:scaleX(0.8929);transform-origin:left 0;letter-spacing:0.0512px;">Торговый дом "Комплексный"; Розничный покупатель</div>
<div class="t" style="left:268.90px;top:527.00px;font-size:9.05px;color:#4a4a4a;font-weight:normal;transform:scaleX(0.8929);transform-origin:left 0;letter-spacing:0.0550px;">Возврат товаров от клиента ТД00-000001 от 23.04.2022 19:00:27</div>
<div class="t" style="left:553.00px;top:527.00px;font-size:9.05px;color:#4a4a4a;font-weight:normal;transform:scaleX(0.8929);transform-origin:left 0;">RUB</div>
<div class="t" style="right:365.80px;top:527.00px;font-size:9.05px;color:#ff2020;font-weight:normal;transform:scaleX(0.8929);transform-origin:right 0;">-5 700,00</div>
<div class="t" style="right:294.80px;top:527.00px;font-size:9.05px;color:#ff2020;font-weight:normal;transform:scaleX(0.8929);transform-origin:right 0;">-5 700,00</div>
<div class="t" style="right:221.80px;top:527.00px;font-size:9.05px;color:#4a4a4a;font-weight:normal;transform:scaleX(0.8929);transform-origin:right 0;">750,00</div>
<div class="t" style="right:32.80px;top:527.00px;font-size:9.05px;color:#4a4a4a;font-weight:normal;transform:scaleX(0.8929);transform-origin:right 0;">1</div>
<div class="t" style="left:29.52px;top:538.00px;font-size:9.05px;color:#4a4a4a;font-weight:normal;transform:scaleX(0.8929);transform-origin:left 0;letter-spacing:0.0512px;">Торговый дом "Комплексный"; Розничный покупатель</div>
<div class="t" style="left:268.90px;top:538.00px;font-size:9.05px;color:#4a4a4a;font-weight:normal;transform:scaleX(0.8929);transform-origin:left 0;letter-spacing:0.0550px;">Возврат товаров от клиента ТД00-000001 от 28.06.2023 22:56:25</div>
<div class="t" style="left:553.00px;top:538.00px;font-size:9.05px;color:#4a4a4a;font-weight:normal;transform:scaleX(0.8929);transform-origin:left 0;">RUB</div>
<div class="t" style="right:221.80px;top:538.00px;font-size:9.05px;color:#4a4a4a;font-weight:normal;transform:scaleX(0.8929);transform-origin:right 0;">2 016,00</div>
<div class="t" style="right:32.80px;top:538.00px;font-size:9.05px;color:#4a4a4a;font-weight:normal;transform:scaleX(0.8929);transform-origin:right 0;">1</div>
<div class="t" style="left:29.52px;top:549.00px;font-size:9.05px;color:#4a4a4a;font-weight:normal;transform:scaleX(0.8929);transform-origin:left 0;letter-spacing:0.0512px;">Торговый дом "Комплексный"; Розничный покупатель</div>
<div class="t" style="left:268.90px;top:549.00px;font-size:9.05px;color:#4a4a4a;font-weight:normal;transform:scaleX(0.8929);transform-origin:left 0;letter-spacing:-0.0585px;">Многоразовый 2.5 1000</div>
<div class="t" style="left:553.00px;top:549.00px;font-size:9.05px;color:#4a4a4a;font-weight:normal;transform:scaleX(0.8929);transform-origin:left 0;">RUB</div>
<div class="t" style="right:221.80px;top:549.00px;font-size:9.05px;color:#4a4a4a;font-weight:normal;transform:scaleX(0.8929);transform-origin:right 0;">1 000,00</div>
<div class="t" style="right:32.80px;top:549.00px;font-size:9.05px;color:#4a4a4a;font-weight:normal;transform:scaleX(0.8929);transform-origin:right 0;">1</div>
<div class="t" style="right:365.80px;top:560.00px;font-size:10.42px;color:#4a4a4a;font-weight:normal;transform:scaleX(0.8929);transform-origin:right 0;">7 509 901,56</div>
<div class="t" style="right:294.80px;top:560.00px;font-size:10.42px;color:#4a4a4a;font-weight:normal;transform:scaleX(0.8929);transform-origin:right 0;">10 863 285,68</div>
<div class="t" style="right:221.80px;top:560.00px;font-size:10.42px;color:#4a4a4a;font-weight:normal;transform:scaleX(0.8929);transform-origin:right 0;">3 766,00</div>
<div class="t" style="right:160.80px;top:560.00px;font-size:10.42px;color:#ff2020;font-weight:normal;transform:scaleX(0.8929);transform-origin:right 0;">-602 235,82</div>
<div class="t" style="right:93.80px;top:560.00px;font-size:10.42px;color:#4a4a4a;font-weight:normal;transform:scaleX(0.8929);transform-origin:right 0;">644 571,92</div>
<div class="t" style="right:32.80px;top:560.00px;font-size:10.42px;color:#4a4a4a;font-weight:normal;transform:scaleX(0.8929);transform-origin:right 0;">149</div>
<div class="a" style="left:20px;top:481px;width:976px;height:16px;border:1px solid #f4c410"></div>
<div class="a" style="left:21px;top:482px;width:974px;height:14px;border:1px solid #f8d560"></div>
<div class="t" style="left:4.26px;top:122.00px;font-size:10.42px;color:#4a4a4a;font-weight:normal;transform:scaleX(0.8929);transform-origin:left 0;letter-spacing:0.0602px;">Период:  - 31.12.2025</div>
<div class="t" style="left:2.97px;top:135.00px;font-size:10.42px;color:#4a4a4a;font-weight:normal;transform:scaleX(0.8929);transform-origin:left 0;letter-spacing:0.0366px;">Тип объекта: Регистр накопления</div>
<div class="t" style="left:3.14px;top:147.00px;font-size:10.42px;color:#4a4a4a;font-weight:normal;transform:scaleX(0.8929);transform-origin:left 0;letter-spacing:0.1325px;">Имя объекта: Расчеты с клиентами</div>
<div class="t" style="left:2.28px;top:159.00px;font-size:10.42px;color:#4a4a4a;font-weight:normal;transform:scaleX(0.8929);transform-origin:left 0;letter-spacing:0.0526px;">Имя таблицы: Остатки</div>
<div class="t" style="left:5.54px;top:172.00px;font-size:10.42px;color:#4a4a4a;font-weight:normal;transform:scaleX(0.8929);transform-origin:left 0;letter-spacing:0.0788px;">Выводить количество подчиненных записей: Да</div>
</div></div>

<!-- scrollbar -->
<div class="a" style="left:1020px;top:129px;width:6px;height:483px;background:#dcdcdc;border-radius:2px"></div>
<div class="a" style="left:1020px;top:556px;width:6px;height:60px;background:#a3a3a3;border-radius:2px"></div>
<svg class="a" style="left:1020.5px;top:118px" width="4" height="4" viewBox="0 0 4 4"><path d="M0.2 3.8 L3.5 0.6 L3.5 3.8 Z" fill="#505050"/></svg>
</body></html>
